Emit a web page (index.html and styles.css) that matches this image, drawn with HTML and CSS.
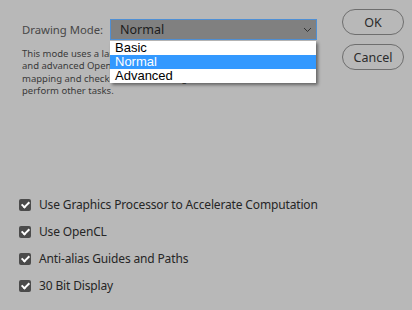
FILE: index.html
```html
<!DOCTYPE html>
<html>
<head>
    <meta charset="UTF-8">
    <meta name="viewport" content="width=device-width, initial-scale=1">
    <title>Performance - Graphics Processor Settings</title>
    <link rel="stylesheet" href="styles.css">
</head>

<body>
    <div class="dialog">
        <div class="main">
            <div class="mode-row">
                <span class="mode-label">Drawing Mode:</span>
                <div class="select">
                    <span class="select-value">Normal</span>
                    <svg class="chevron" width="9" height="6" viewBox="0 0 9 6">
                        <path d="M1 1 L4.5 4.5 L8 1" fill="none" stroke="#333" stroke-width="1"/>
                    </svg>
                    <ul class="options">
                        <li>Basic</li>
                        <li class="selected">Normal</li>
                        <li>Advanced</li>
                    </ul>
                </div>
            </div>

            <p class="description">
                This mode uses a larger amount of GPU memory<br>
                and advanced OpenGL features to enable color<br>
                mapping and checkerboard blending. Use Basic to<br>
                perform other tasks.
            </p>

            <div class="options-list">
                <label class="check"><span class="box"></span>Use Graphics Processor to Accelerate Computation</label>
                <label class="check"><span class="box"></span>Use OpenCL</label>
                <label class="check"><span class="box"></span>Anti-alias Guides and Paths</label>
                <label class="check"><span class="box"></span>30 Bit Display</label>
            </div>
        </div>

        <div class="buttons">
            <button class="btn">OK</button>
            <button class="btn">Cancel</button>
        </div>
    </div>
</body>
</html>
```

FILE: styles.css
```css
* {
    box-sizing: border-box;
}

body {
    margin: 0;
    background: #b8b8b8;
    font-family: "Noto Sans", "Open Sans", sans-serif;
    color: #2b2b2b;
}

.dialog {
    display: flex;
    height: 310px;
}

.main {
    flex: 1;
    min-width: 0;
    display: flex;
    flex-direction: column;
    padding: 19px 0 0 19px;
}

.mode-row {
    display: flex;
    align-items: center;
    height: 21px;
}

.mode-label {
    width: 91px;
    padding-left: 3px;
    font-size: 11.3px;
    white-space: nowrap;
    color: #474747;
}

.select {
    position: relative;
    width: 207px;
    height: 21px;
    background: #808080;
    border: 1px solid #4f8fd4;
    display: flex;
    align-items: center;
    padding-left: 9px;
}

.select-value {
    flex: 1;
    font-size: 12.5px;
    color: #1c1c1c;
}

.chevron {
    margin-right: 4px;
}

.options {
    position: absolute;
    left: -1px;
    top: 21px;
    width: 206px;
    margin: 0;
    padding: 0;
    list-style: none;
    background: #fff;
    box-shadow: 2px 2px 3px rgba(0, 0, 0, 0.45);
    font-family: "Liberation Sans", Arial, sans-serif;
    font-size: 13px;
    color: #000;
}

.options li {
    height: 14px;
    line-height: 14px;
    padding-left: 5px;
}

.options li.selected {
    background: #3399ff;
    color: #fff;
}

.description {
    margin: 8px 0 0 3px;
    font-size: 9.5px;
    line-height: 12.3px;
    white-space: nowrap;
    color: #3a3a3a;
}

.options-list {
    margin-top: auto;
    padding-bottom: 11px;
    display: flex;
    flex-direction: column;
}

.check {
    display: flex;
    align-items: center;
    height: 27px;
    font-size: 12px;
    letter-spacing: -0.15px;
    white-space: nowrap;
    color: #262626;
}

.box {
    position: relative;
    flex: none;
    width: 12px;
    height: 12px;
    margin-right: 8px;
    background: #4b4b4b;
    border-radius: 2px;
}

.box::after {
    content: "";
    position: absolute;
    left: 4px;
    top: 1.5px;
    width: 3px;
    height: 6px;
    border: solid #fff;
    border-width: 0 2px 2px 0;
    transform: rotate(45deg);
}

.buttons {
    display: flex;
    flex-direction: column;
    gap: 9px;
    padding: 9px 8px 0 0;
}

.btn {
    width: 62px;
    height: 26px;
    border: 1px solid #6e6e6e;
    border-radius: 13px;
    background: transparent;
    font-family: "Noto Sans", "Open Sans", sans-serif;
    font-size: 12.5px;
    color: #2b2b2b;
    padding: 0;
}
```
